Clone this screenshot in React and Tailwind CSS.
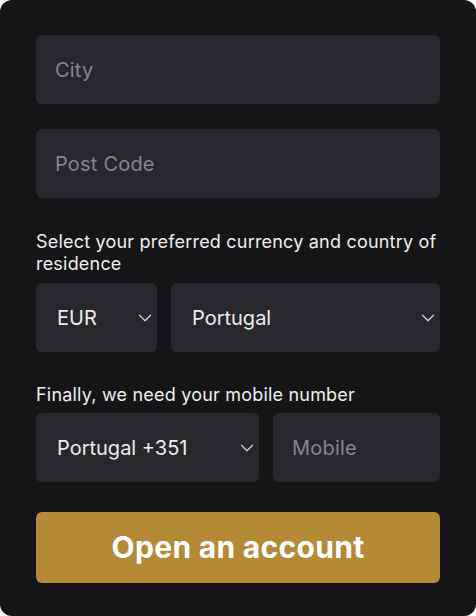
import { ChevronDown } from "lucide-react";

function Field({ placeholder, className = "" }) {
  return (
    <div
      className={`h-[69px] rounded-md bg-[#28282c] flex items-center px-[19px] text-[20px] tracking-[0.2px] text-[#86868a] ${className}`}
    >
      {placeholder}
    </div>
  );
}

function Select({ value, className = "" }) {
  return (
    <div
      className={`h-[69px] rounded-md bg-[#28282c] flex items-center justify-between pl-[21px] pr-[1px] text-[20px] text-[#ececec] ${className}`}
    >
      <span>{value}</span>
      <ChevronDown size={22} strokeWidth={1.3} className="text-[#d8d8d8]" />
    </div>
  );
}

export default function App() {
  return (
    <div className="w-[476px] h-[616px] bg-white">
      <div
        className="h-full rounded-[12px] bg-[#151517] px-9 pt-[35px] text-white"
        style={{ fontFamily: "Inter, 'Noto Sans', sans-serif" }}
      >
        {/* ADDRESS */}
        <Field placeholder="City" />
        <Field placeholder="Post Code" className="mt-[25px]" />

        {/* CURRENCY + COUNTRY */}
        <p className="mt-[33px] text-[18px] leading-[22px] tracking-[0.2px] text-[#eeeeee]">
          Select your preferred currency and country of residence
        </p>
        <div className="mt-[8px] flex gap-[14px]">
          <Select value="EUR" className="w-[121px]" />
          <Select value="Portugal" className="flex-1" />
        </div>

        {/* MOBILE */}
        <p className="mt-[32px] text-[18px] leading-[22px] tracking-[0.2px] text-[#eeeeee]">
          Finally, we need your mobile number
        </p>
        <div className="mt-[7px] flex gap-[14px]">
          <Select value="Portugal +351" className="w-[223px]" />
          <Field placeholder="Mobile" className="flex-1 px-[17px]" />
        </div>

        <button className="mt-[30px] w-full h-[71px] rounded-md bg-[#b48a36] text-[30px] tracking-[0.3px] font-bold text-white">
          Open an account
        </button>
      </div>
    </div>
  );
}
